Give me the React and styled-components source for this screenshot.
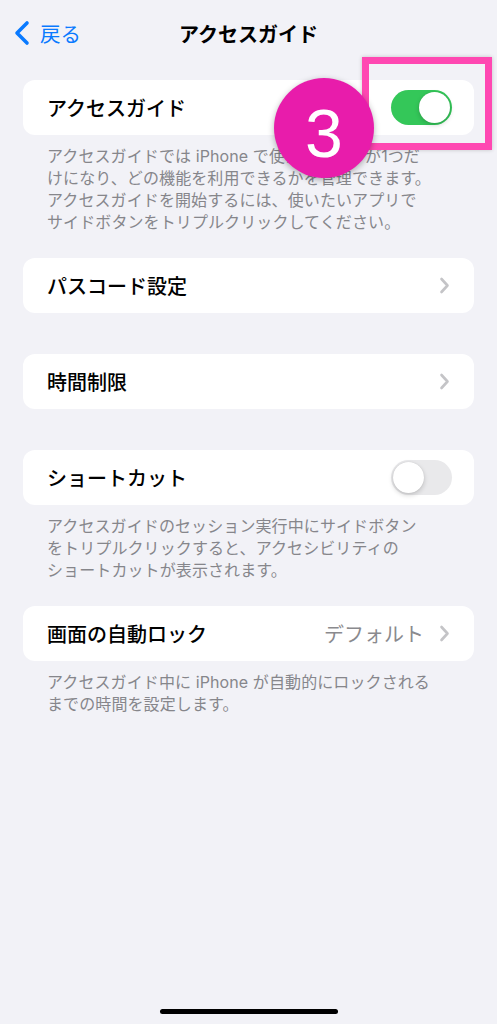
import styled, { createGlobalStyle } from "styled-components";

const GlobalStyle = createGlobalStyle`
  body {
    margin: 0;
    background: #f2f2f7;
    font-family: "Inter", "Noto Sans CJK JP", sans-serif;
    color: #000;
  }
`;

const App = () => {
  return (
    <Page>
      <GlobalStyle />
      <Nav>
        <Back>
          <svg width="18" height="26" viewBox="0 0 18 26">
            <polyline
              points="14,3 4,13 14,23"
              fill="none"
              stroke="#0a7aff"
              strokeWidth="3.6"
              strokeLinecap="round"
              strokeLinejoin="round"
            />
          </svg>
          <span>戻る</span>
        </Back>
        <Title>アクセスガイド</Title>
        <div />
      </Nav>

      <List>
        <Section>
          <Card>
            <Label>アクセスガイド</Label>
            <Toggle $on />
          </Card>
          <Footer>
            アクセスガイドでは iPhone で使えるアプリが1つだ
            <br />
            けになり、どの機能を利用できるかを管理できます。
            <br />
            アクセスガイドを開始するには、使いたいアプリで
            <br />
            サイドボタンをトリプルクリックしてください。
          </Footer>
        </Section>

        <Section $bare>
          <Card>
            <Label>パスコード設定</Label>
            <Chevron />
          </Card>
        </Section>

        <Section $bare>
          <Card>
            <Label>時間制限</Label>
            <Chevron />
          </Card>
        </Section>

        <Section>
          <Card>
            <Label>ショートカット</Label>
            <Toggle />
          </Card>
          <Footer>
            アクセスガイドのセッション実行中にサイドボタン
            <br />
            をトリプルクリックすると、アクセシビリティの
            <br />
            ショートカットが表示されます。
          </Footer>
        </Section>

        <Section>
          <Card>
            <Label>画面の自動ロック</Label>
            <Value>
              デフォルト
              <Chevron />
            </Value>
          </Card>
          <Footer>
            アクセスガイド中に iPhone が自動的にロックされる
            <br />
            までの時間を設定します。
          </Footer>
        </Section>
      </List>

      <HomeBar />

      <Highlight />
      <Badge>3</Badge>
    </Page>
  );
};

const Chevron = () => (
  <ChevronIcon width="11" height="17" viewBox="0 0 11 17">
    <polyline
      points="2.5,2 8.5,8.5 2.5,15"
      fill="none"
      stroke="#c4c4c7"
      strokeWidth="2.6"
      strokeLinecap="round"
      strokeLinejoin="round"
    />
  </ChevronIcon>
);

const Toggle = ({ $on }) => (
  <Track $on={$on}>
    <Knob $on={$on} />
  </Track>
);

export default App;

const Page = styled.div`
  position: relative;
  min-height: 100vh;
  display: flex;
  flex-direction: column;
`;

const Nav = styled.header`
  height: 66px;
  display: grid;
  grid-template-columns: 1fr auto 1fr;
  align-items: center;
`;

const Back = styled.div`
  display: flex;
  align-items: center;
  gap: 9px;
  padding-left: 13px;
  color: #0a7aff;
  font-size: 20.5px;
  span {
    margin-top: -1px;
  }
`;

const Title = styled.h1`
  margin: 0;
  font-size: 20px;
  font-weight: 700;
`;

const List = styled.main`
  display: flex;
  flex-direction: column;
  gap: 25px;
  padding: 14px 23px 0;
`;

const Section = styled.section`
  padding-bottom: ${(p) => (p.$bare ? "16px" : "0")};
`;

const Card = styled.div`
  height: 55px;
  box-sizing: border-box;
  display: flex;
  align-items: center;
  justify-content: space-between;
  padding: 0 24px;
  background: #fff;
  border-radius: 12px;
`;

const Label = styled.span`
  font-size: 20px;
  font-weight: 500;
`;

const Value = styled.span`
  display: flex;
  align-items: center;
  gap: 15px;
  font-size: 20px;
  color: #8a8a8e;
`;

const ChevronIcon = styled.svg`
  display: block;
`;

const Footer = styled.p`
  margin: 0;
  padding: 10px 24px 0;
  font-size: 16px;
  line-height: 22px;
  letter-spacing: 0.1px;
  color: #86868b;
`;

const Track = styled.div`
  position: relative;
  width: 61px;
  height: 35px;
  margin-right: -2px;
  border-radius: 18px;
  background: ${(p) => (p.$on ? "#34c759" : "#e9e9eb")};
`;

const Knob = styled.div`
  position: absolute;
  top: 2px;
  left: ${(p) => (p.$on ? "28px" : "2px")};
  width: 31px;
  height: 31px;
  border-radius: 50%;
  background: #fff;
  box-shadow: 0 2px 5px rgba(0, 0, 0, 0.18), 0 0 1px rgba(0, 0, 0, 0.15);
`;

const HomeBar = styled.div`
  width: 178px;
  height: 5px;
  margin: auto auto 10px;
  border-radius: 3px;
  background: #000;
`;

const Highlight = styled.div`
  position: absolute;
  left: 362px;
  top: 57px;
  width: 130px;
  height: 93px;
  box-sizing: border-box;
  border: 7.5px solid #ff48b2;
  box-shadow: 0 0 4px rgba(0, 0, 0, 0.2);
`;

const Badge = styled.div`
  position: absolute;
  left: 274px;
  top: 78px;
  width: 100px;
  height: 100px;
  border-radius: 50%;
  display: flex;
  align-items: center;
  justify-content: center;
  background: #e81cab;
  box-shadow: 0 2px 6px rgba(0, 0, 0, 0.3);
  color: #fff;
  font-family: "Liberation Sans", sans-serif;
  font-size: 68px;
  line-height: 1;
  padding-top: 10px;
  box-sizing: border-box;
`;
